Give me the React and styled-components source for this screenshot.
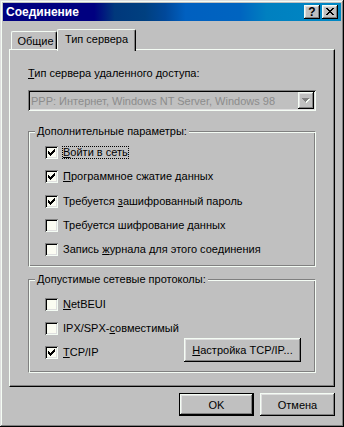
import React from "react";
import styled, { createGlobalStyle, css } from "styled-components";

const HI = "#f4fcf4";
const FACE = "#c0c0c0";
const SH = "#808080";
const LT = "#dfdfdf";

const GlobalStyle = createGlobalStyle`
  html, body { margin: 0; padding: 0; background: ${FACE}; }
  body {
    font-family: "Liberation Sans", Arial, sans-serif;
    font-size: 11px;
    color: #000;
  }
  * { box-sizing: border-box; }
`;

const raised = css`
  background: ${FACE};
  box-shadow: inset -1px -1px #000, inset 1px 1px ${HI}, inset -2px -2px ${SH},
    inset 2px 2px ${LT};
`;

const Window = styled.div`
  width: 344px;
  height: 427px;
  padding: 3px;
  background: ${FACE};
  box-shadow: inset -1px -1px #000, inset 1px 1px ${LT}, inset -2px -2px ${SH},
    inset 2px 2px ${HI};
  display: flex;
  flex-direction: column;
`;

const TitleBar = styled.div`
  height: 18px;
  display: flex;
  align-items: center;
  padding: 0 3px 0 3px;
  background: linear-gradient(
    90deg,
    #000080 0%,
    #000080 27%,
    #00387c 33%,
    #004080 42%,
    #00489a 48%,
    #0060c0 54%,
    #0064c0 70%,
    #0080c0 78%,
    #0088c4 100%
  );
`;

const TitleText = styled.div`
  flex: 1;
  color: #fff;
  font-weight: bold;
  font-size: 12px;
  line-height: 14px;
`;

const TitleButtons = styled.div`
  display: flex;
  gap: 2px;
`;

const TitleButton = styled.div`
  ${raised};
  width: 16px;
  height: 14px;
  display: flex;
  align-items: center;
  justify-content: center;
  font-weight: bold;
  font-size: 12px;
  line-height: 12px;
  padding-bottom: 1px;
`;

const Body = styled.div`
  flex: 1;
  display: flex;
  flex-direction: column;
  padding: 8px 6px 0;
`;

const TabStrip = styled.div`
  display: flex;
  align-items: flex-end;
  padding-left: 2px;
  margin-bottom: -2px;
  position: relative;
  z-index: 1;
  height: 22px;
`;

const Tab = styled.div`
  background: ${FACE};
  border-top: 1px solid ${HI};
  border-left: 1px solid ${HI};
  border-right: 1px solid #000;
  border-radius: 2px 2px 0 0;
  box-shadow: inset -1px 0 ${SH};
  display: flex;
  align-items: center;
  justify-content: center;
  width: ${(p) => p.$w}px;
  ${(p) =>
    p.$active
      ? css`
          height: 22px;
          padding-bottom: 3px;
        `
      : css`
          height: 18px;
          margin-bottom: 2px;
          padding-left: 3px;
        `}
`;

const Panel = styled.div`
  height: 338px;
  border-top: 1px solid ${HI};
  border-left: 1px solid ${HI};
  border-right: 1px solid #000;
  border-bottom: 1px solid #000;
  box-shadow: inset -1px -1px ${SH};
  padding: 17px 18px 0;
  display: flex;
  flex-direction: column;
`;

const Label = styled.div`
  line-height: 13px;
  height: 13px;
`;

const Combo = styled.div`
  margin-top: 10px;
  height: 21px;
  display: flex;
  align-items: stretch;
  padding: 2px;
  background: ${FACE};
  box-shadow: inset 1px 1px ${SH}, inset -1px -1px ${HI}, inset 2px 2px #000,
    inset -2px -2px ${LT};
`;

const ComboText = styled.div`
  flex: 1;
  padding-left: 1px;
  color: #8c8c8c;
  display: flex;
  align-items: center;
  white-space: nowrap;
`;

const ComboArrow = styled.div`
  ${raised};
  width: 16px;
  display: flex;
  align-items: center;
  justify-content: center;
`;

const Group = styled.div`
  position: relative;
  margin-top: ${(p) => p.$mt}px;
  height: ${(p) => p.$h}px;
  border-top: 1px solid ${SH};
  border-left: 1px solid ${SH};
  border-right: 1px solid ${HI};
  border-bottom: 1px solid ${HI};
  box-shadow: inset 1px 1px ${HI}, inset -1px -1px ${SH};
  padding: ${(p) => p.$pt}px 14px 0 16px;
  display: flex;
  flex-direction: column;
  gap: ${(p) => p.$gap}px;
`;

const Legend = styled.div`
  position: absolute;
  top: -7px;
  left: 6px;
  padding: 0 2px;
  background: ${FACE};
  line-height: 13px;
`;

const Row = styled.div`
  height: 13px;
  display: flex;
  align-items: center;
  gap: 4px;
  flex: none;
`;

const Box = styled.div`
  width: 13px;
  height: 13px;
  flex: none;
  padding: 3px;
  background: #fbfcf2;
  box-shadow: inset 1px 1px ${SH}, inset -1px -1px ${HI}, inset 2px 2px #000,
    inset -2px -2px ${LT};
  display: flex;
`;

const RowLabel = styled.span`
  line-height: 11px;
  border: 1px ${(p) => (p.$focus ? "dotted #000" : "solid transparent")};
  white-space: nowrap;
`;

const U = styled.span`
  text-decoration: underline;
`;

const Button = styled.div`
  ${raised};
  width: ${(p) => p.$w}px;
  height: ${(p) => p.$h}px;
  display: flex;
  align-items: center;
  justify-content: center;
  white-space: nowrap;
  ${(p) =>
    p.$default &&
    css`
      box-shadow: inset 0 0 0 1px #000, inset -2px -2px #000,
        inset 2px 2px ${HI}, inset -3px -3px ${SH}, inset 3px 3px ${LT};
    `}
`;

const SideButton = styled(Button)`
  margin-left: auto;
  margin-bottom: 5px;
`;

const ButtonRow = styled.div`
  display: flex;
  justify-content: flex-end;
  gap: 6px;
  margin-top: 6px;
`;

const Check = () => (
  <svg width="7" height="7" viewBox="0 0 7 7" shapeRendering="crispEdges">
    <path
      fill="#000"
      d="M0 2h1v3H0z M1 3h1v3H1z M2 4h1v3H2z M3 3h1v3H3z M4 2h1v3H4z M5 1h1v3H5z M6 0h1v3H6z"
    />
  </svg>
);

const CloseGlyph = () => (
  <svg width="8" height="7" viewBox="0 0 8 7" shapeRendering="crispEdges">
    <path
      fill="#000"
      d="M0 0h2v1H0z M6 0h2v1H6z M1 1h2v1H1z M5 1h2v1H5z M2 2h4v1H2z M3 3h2v1H3z M2 4h4v1H2z M1 5h2v1H1z M5 5h2v1H5z M0 6h2v1H0z M6 6h2v1H6z"
    />
  </svg>
);

const DisabledArrow = () => (
  <svg width="8" height="5" viewBox="0 0 8 5" shapeRendering="crispEdges">
    <path fill={HI} d="M1 1h7v1H1z M2 2h5v1H2z M3 3h3v1H3z M4 4h1v1H4z" />
    <path fill={SH} d="M0 0h7v1H0z M1 1h5v1H1z M2 2h3v1H2z M3 3h1v1H3z" />
  </svg>
);

const CheckRow = ({ checked, focus, children }) => (
  <Row>
    <Box>{checked && <Check />}</Box>
    <RowLabel $focus={focus}>{children}</RowLabel>
  </Row>
);

export default function App() {
  return (
    <>
      <GlobalStyle />
      <Window>
        <TitleBar>
          <TitleText>Соединение</TitleText>
          <TitleButtons>
            <TitleButton>?</TitleButton>
            <TitleButton>
              <CloseGlyph />
            </TitleButton>
          </TitleButtons>
        </TitleBar>
        <Body>
          <TabStrip>
            <Tab $w={46}>Общие</Tab>
            <Tab $w={79} $active>
              Тип сервера
            </Tab>
          </TabStrip>
          <Panel>
            <Label>
              <U>Т</U>ип сервера удаленного доступа:
            </Label>
            <Combo>
              <ComboText>PPP: Интернет, Windows NT Server, Windows 98</ComboText>
              <ComboArrow>
                <DisabledArrow />
              </ComboArrow>
            </Combo>
            <Group $mt={20} $h={136} $pt={14} $gap={11.25}>
              <Legend>Дополнительные параметры:</Legend>
              <CheckRow checked focus>
                <U>В</U>ойти в сеть
              </CheckRow>
              <CheckRow checked>
                <U>П</U>рограммное сжатие данных
              </CheckRow>
              <CheckRow checked>
                Требуется <U>з</U>ашифрованный пароль
              </CheckRow>
              <CheckRow>
                Требуется шифрование <U>д</U>анных
              </CheckRow>
              <CheckRow>
                Запись <U>ж</U>урнала для этого соединения
              </CheckRow>
            </Group>
            <Group $mt={12} $h={94} $pt={18} $gap={11}>
              <Legend>Допустимые сетевые протоколы:</Legend>
              <CheckRow>
                <U>N</U>etBEUI
              </CheckRow>
              <CheckRow>
                IPX/SPX-<U>с</U>овместимый
              </CheckRow>
              <Row>
                <Box>
                  <Check />
                </Box>
                <RowLabel>
                  <U>T</U>CP/IP
                </RowLabel>
                <SideButton $w={117} $h={24}>
                  <span>
                    <U>Н</U>астройка TCP/IP...
                  </span>
                </SideButton>
              </Row>
            </Group>
          </Panel>
          <ButtonRow>
            <Button $w={75} $h={23} $default>
              OK
            </Button>
            <Button $w={75} $h={23}>
              Отмена
            </Button>
          </ButtonRow>
        </Body>
      </Window>
    </>
  );
}
